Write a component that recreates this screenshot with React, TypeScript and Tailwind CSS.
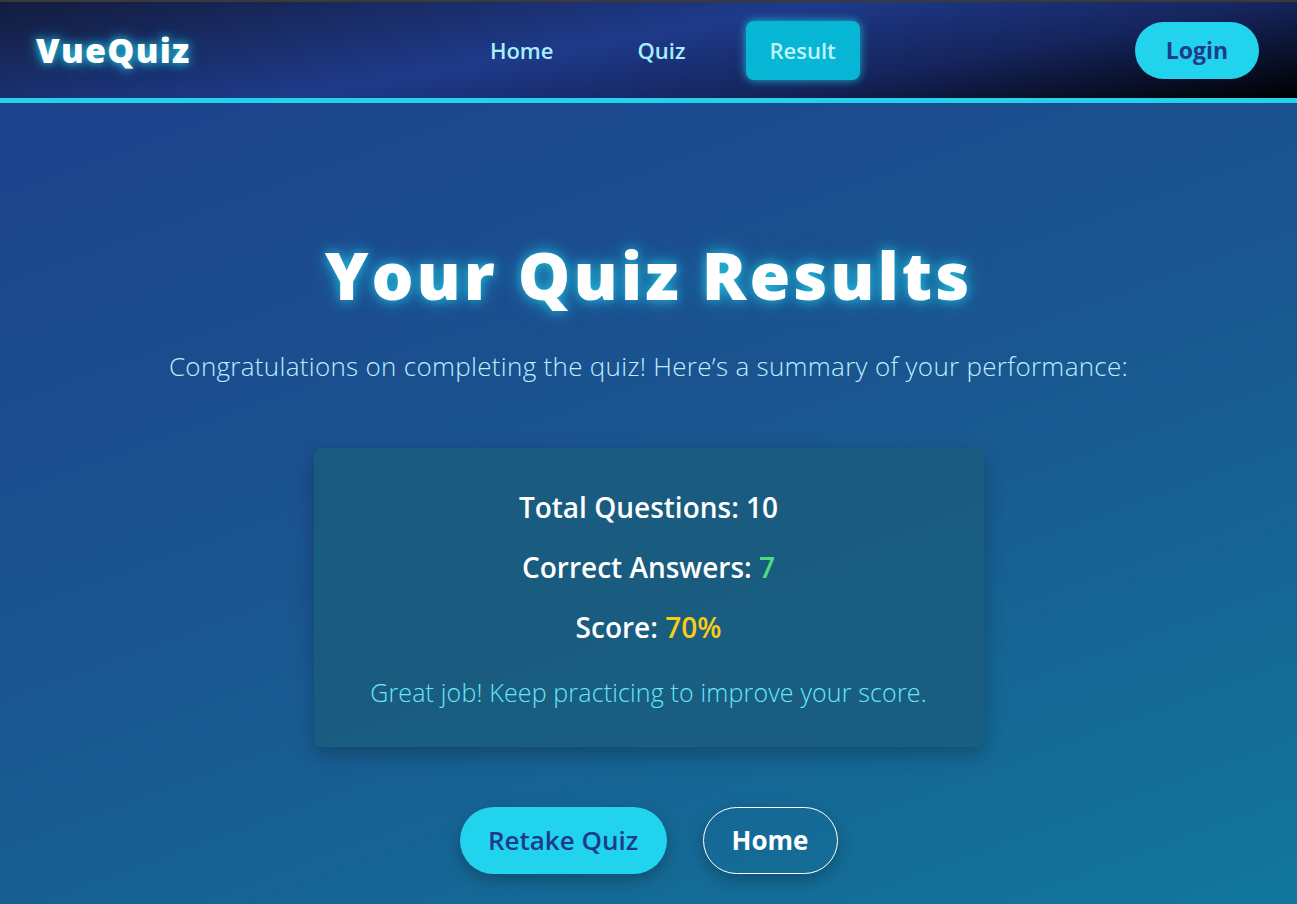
import React from 'react';

const navLinks = ['Home', 'Quiz', 'Result'];

const App = () => {
  return (
    <div className="min-h-screen flex flex-col border-t-2 border-[#3a3a3a] bg-[linear-gradient(160deg,#1e3f8c_0%,#1a5590_50%,#11779a_100%)] font-['Open_Sans',sans-serif]">
      {/* Header */}
      <header className="h-[101px] flex items-center justify-between pl-9 pr-[38px] border-b-[5px] border-[#22d3ee] bg-[linear-gradient(170deg,#131c3d_0%,#1e3a8a_45%,#15245c_70%,#000000_100%)]">
        <div className="text-[34px] font-black text-white tracking-[1.3px] [text-shadow:0_0_8px_rgba(34,211,238,0.9),0_0_16px_rgba(34,211,238,0.5)]">
          VueQuiz
        </div>
        <nav className="flex items-center gap-9">
          {navLinks.map((link) => (
            <a
              key={link}
              href="#"
              className={
                link === 'Result'
                  ? 'px-6 h-[59px] flex items-center rounded-lg bg-[#06b6d4] text-[22px] font-semibold text-[#bff4fb] shadow-[0_0_10px_rgba(34,211,238,0.8)]'
                  : 'px-6 h-[59px] flex items-center text-[22px] font-semibold text-[#a5f0fb]'
              }
            >
              {link}
            </a>
          ))}
        </nav>
        <button className="w-[124px] h-[57px] rounded-full bg-[#22d3ee] text-[23px] font-bold text-[#1e3a8a]">
          Login
        </button>
      </header>

      {/* Result */}
      <main className="flex-1 flex flex-col items-center pt-[138px] pb-8">
        <h1 className="text-[66px] leading-none font-black tracking-[3px] text-white [text-shadow:0_0_12px_rgba(34,211,238,0.8),0_0_24px_rgba(34,211,238,0.4)]">
          Your Quiz Results
        </h1>
        <p className="mt-[40px] text-[26px] font-light tracking-[0.3px] text-[#bdeefd]">
          Congratulations on completing the quiz! Here’s a summary of your performance:
        </p>

        <div className="mt-[62px] w-[670px] rounded-lg bg-[#1a5c7c]/80 shadow-[0_8px_20px_rgba(0,0,0,0.25)] pt-[38px] pb-[35px] flex flex-col items-center">
          <p className="text-[28px] font-semibold text-white">
            Total Questions: 10
          </p>
          <p className="mt-[18px] text-[28px] font-semibold text-white">
            Correct Answers: <span className="text-[#4ade80]">7</span>
          </p>
          <p className="mt-[18px] text-[28px] font-semibold text-white">
            Score: <span className="text-[#facc15]">70%</span>
          </p>
          <p className="mt-[26px] text-[25px] font-light tracking-[0.15px] text-[#67e8f9]">
            Great job! Keep practicing to improve your score.
          </p>
        </div>

        <div className="mt-[60px] flex items-center gap-9">
          <button className="w-[207px] h-[67px] rounded-full bg-[#22d3ee] text-[26px] font-semibold text-[#1e3a8a] shadow-[0_6px_16px_rgba(0,0,0,0.25)]">
            Retake Quiz
          </button>
          <button className="w-[135px] h-[67px] rounded-full border border-white text-[26px] font-bold text-white shadow-[0_6px_16px_rgba(0,0,0,0.25)]">
            Home
          </button>
        </div>
      </main>
    </div>
  );
};

export default App;
